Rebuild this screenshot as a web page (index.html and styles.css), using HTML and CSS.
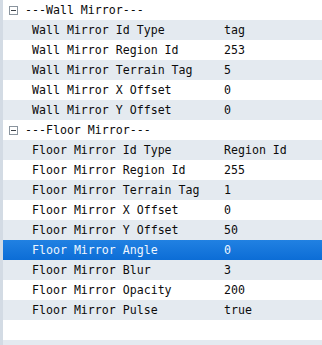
FILE: index.html
```html
<!DOCTYPE html>
<html lang="en">
<head>
    <meta charset="UTF-8">
    <title>Mirror Properties</title>
    <link rel="stylesheet" href="styles.css">
</head>
<body>
    <div class="grid">
        <div class="row group">
            <span class="toggle"></span>
            <span class="group-name">---Wall Mirror---</span>
        </div>
        <div class="row alt"><span class="name">Wall Mirror Id Type</span><span class="value">tag</span></div>
        <div class="row"><span class="name">Wall Mirror Region Id</span><span class="value">253</span></div>
        <div class="row alt"><span class="name">Wall Mirror Terrain Tag</span><span class="value">5</span></div>
        <div class="row"><span class="name">Wall Mirror X Offset</span><span class="value">0</span></div>
        <div class="row alt"><span class="name">Wall Mirror Y Offset</span><span class="value">0</span></div>

        <div class="row group">
            <span class="toggle"></span>
            <span class="group-name">---Floor Mirror---</span>
        </div>
        <div class="row alt"><span class="name">Floor Mirror Id Type</span><span class="value">Region Id</span></div>
        <div class="row"><span class="name">Floor Mirror Region Id</span><span class="value">255</span></div>
        <div class="row alt"><span class="name">Floor Mirror Terrain Tag</span><span class="value">1</span></div>
        <div class="row"><span class="name">Floor Mirror X Offset</span><span class="value">0</span></div>
        <div class="row alt"><span class="name">Floor Mirror Y Offset</span><span class="value">50</span></div>
        <div class="row selected"><span class="name">Floor Mirror Angle</span><span class="value">0</span></div>
        <div class="row alt"><span class="name">Floor Mirror Blur</span><span class="value">3</span></div>
        <div class="row"><span class="name">Floor Mirror Opacity</span><span class="value">200</span></div>
        <div class="row alt"><span class="name">Floor Mirror Pulse</span><span class="value">true</span></div>
        <div class="row"></div>
        <div class="row alt"></div>
    </div>
</body>
</html>
```

FILE: styles.css
```css
body {
    margin: 0;
    background-color: #fff;
    font-family: "DejaVu Sans Mono", monospace;
    font-size: 11.6px;
    color: #0c0c0c;
}
.grid {
    border-left: 3px solid #d3dbe4;
    box-shadow: inset 1px 0 0 #9da7b3;
    height: 345px;
    overflow: hidden;
}
.row {
    display: flex;
    align-items: center;
    height: 20px;
    padding-left: 29px;
    background-color: #fff;
    white-space: nowrap;
}
.row.alt {
    background-color: #e4eaf0;
}
.row.selected {
    background: linear-gradient(#2181e2, #0c6dd6);
    color: #eef6ff;
}
.row.group {
    padding-left: 6px;
}
.toggle {
    position: relative;
    box-sizing: border-box;
    width: 9px;
    height: 9px;
    margin-top: 1px;
    border: 1px solid #8a949e;
    background-color: #fff;
    margin-right: 7px;
}
.toggle::after {
    content: "";
    position: absolute;
    left: 1px;
    top: 3px;
    width: 5px;
    height: 1px;
    background-color: #3c4248;
}
.name {
    width: 192px;
}
```
